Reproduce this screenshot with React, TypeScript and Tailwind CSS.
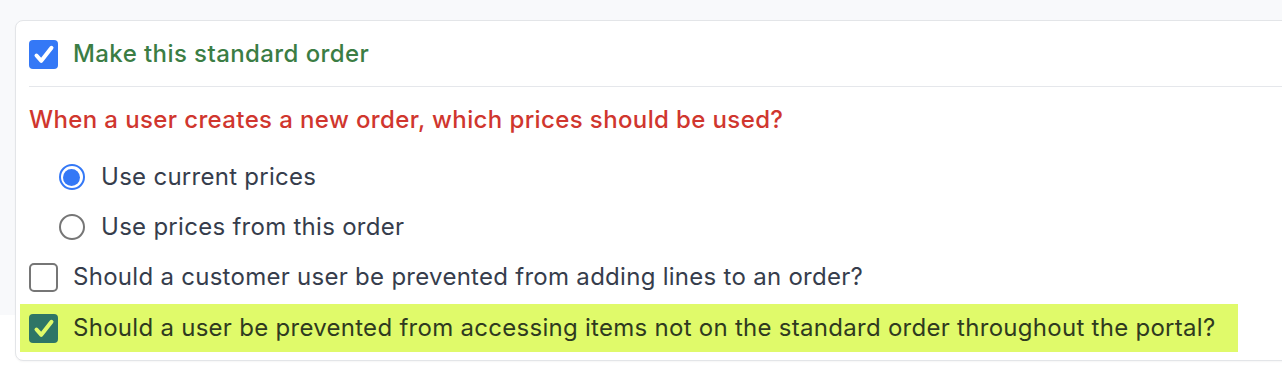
import React from 'react';

function Check({ bg, mark }: { bg: string; mark: string }) {
  return (
    <svg width="29" height="29" viewBox="0 0 29 29" className="shrink-0">
      <rect x="0" y="0" width="29" height="29" rx="4" fill={bg} />
      <path d="M7.5 15.5 L12.3 20.8 L22.5 7.8" fill="none" stroke={mark} strokeWidth="4" strokeLinecap="round" strokeLinejoin="round" />
    </svg>
  );
}

function Radio({ on }: { on?: boolean }) {
  return (
    <span className="w-[27px] flex justify-center shrink-0">
      {on ? (
        <span className="w-[26px] h-[26px] rounded-full border-2 border-[#3478f6] flex items-center justify-center">
          <span className="w-[17px] h-[17px] rounded-full bg-[#3478f6]" />
        </span>
      ) : (
        <span className="w-[26px] h-[26px] rounded-full border-2 border-[#767676] bg-white" />
      )}
    </span>
  );
}

export default function App() {
  return (
    <div className="h-[368px] overflow-hidden bg-[linear-gradient(to_bottom,#f8f9fb_315px,#ffffff_315px)] pt-[20px] pl-[15px] font-['Inter',sans-serif] text-[24px] tracking-[0.28px] text-[#363d4c]">
      <div className="w-[1300px] h-[341px] bg-white border border-[#e3e5e8] rounded-lg shadow-[0_1px_2px_rgba(0,0,0,0.04)] pl-[13px]">
        <div className="h-[50px] mt-[8px] flex items-center gap-[15px]">
          <Check bg="#3478f6" mark="#ffffff" />
          <span className="font-medium tracking-[0.42px] text-[#3b7d44]">Make this standard order</span>
        </div>
        <div className="mt-[7px] h-px bg-[#e5e7eb]" />
        <div className="mt-[13px] h-[40px] flex items-center font-medium tracking-[0.38px] text-[#d0362e]">
          When a user creates a new order, which prices should be used?
        </div>
        <div className="mt-[12px] pl-[29px]">
          <label className="h-[50px] flex items-center gap-[16px]">
            <Radio on />
            <span>Use current prices</span>
          </label>
          <label className="h-[50px] flex items-center gap-[16px]">
            <Radio />
            <span>Use prices from this order</span>
          </label>
        </div>
        <label className="h-[50px] flex items-center gap-[15px]">
          <span className="w-[29px] h-[29px] rounded-[5px] border-2 border-[#767676] bg-white shrink-0" />
          <span>Should a customer user be prevented from adding lines to an order?</span>
        </label>
        <label className="mt-[2px] -ml-[9px] w-[1218px] h-[48px] bg-[#e0fa6a] pl-[9px] flex items-center gap-[15px] text-[#2f3a20]">
          <Check bg="#2e7566" mark="#e0fa6a" />
          <span>Should a user be prevented from accessing items not on the standard order throughout the portal?</span>
        </label>
      </div>
    </div>
  );
}
